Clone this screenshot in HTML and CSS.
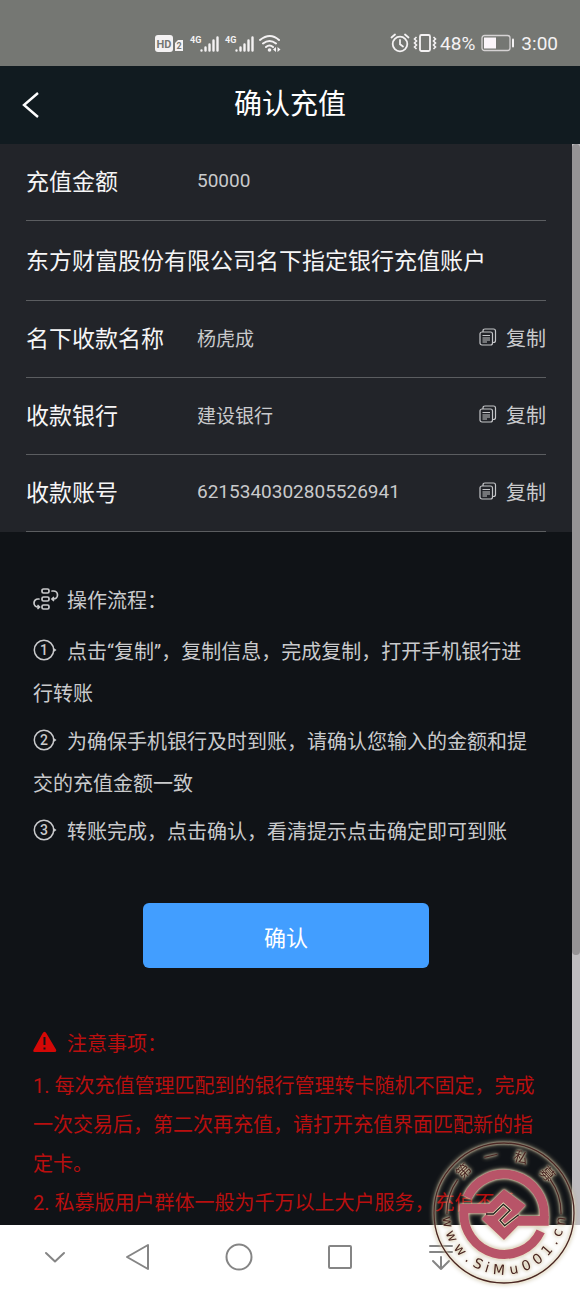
FILE: index.html
```
<!DOCTYPE html>
<html lang="zh-CN">

<head>
    <meta charset="UTF-8">
    <meta name="viewport" content="width=device-width, initial-scale=1.0">
    <title>确认充值</title>
    <link rel="stylesheet" href="styles.css">
</head>

<body>
    <!-- status bar -->
    <div class="status">
        <svg class="signals" width="128" height="24" viewBox="0 0 128 24">
            <rect x="0" y="4" width="18" height="17" rx="3" fill="#f4f2f3"/>
            <text x="9" y="17" class="hd">HD</text>
            <path d="M20 12l3-3h5v11h-8z" fill="#f4f2f3"/>
            <text x="24" y="18" class="sim">2</text>
            <text x="35" y="12" class="net">4G</text>
            <g stroke="#f4f2f3" stroke-width="2.4" stroke-linecap="round">
                <path d="M46.500 19.500v0M50.500 19.500v-3M54.500 19.500v-6M58.500 19.500v-10M62.500 19.500v-13"/>
                <path d="M81.500 19.500v0M85.500 19.500v-3M89.500 19.500v-6M93.500 19.500v-10M97.500 19.500v-13"/>
            </g>
            <text x="70" y="12" class="net">4G</text>
            <g fill="none" stroke="#f4f2f3" stroke-width="2" stroke-linecap="round">
                <path d="M105 9q10-8 19 0M108 12.500q6.500-5 13 0M111 16q3.500-3 7 0"/>
            </g>
            <circle cx="114.500" cy="19" r="1.800" fill="#f4f2f3"/>
            <path d="M121 16v5l-3-2.500zM122.500 16v5l3-2.500z" fill="#f4f2f3"/>
        </svg>
        <div class="status-right">
            <svg width="20" height="20" viewBox="0 0 20 20" fill="none" stroke="#f4f2f3" stroke-width="1.800" stroke-linecap="round">
                <circle cx="10" cy="11" r="7.300"/>
                <path d="M10 7v4.300l3 2.200M1.500 4.500l3.500-3M18.500 4.500l-3.500-3"/>
            </svg>
            <svg width="24" height="20" viewBox="0 0 24 20" fill="none" stroke="#f4f2f3" stroke-width="1.800">
                <rect x="7" y="2" width="10" height="16" rx="1.500"/>
                <path d="M3.500 4l-2 2 2 2-2 2 2 2-2 2 2 2M20.500 4l2 2-2 2 2 2-2 2 2 2-2 2" stroke-width="1.600"/>
            </svg>
            <span>48%</span>
            <svg class="battery" width="34" height="18" viewBox="0 0 34 18">
                <rect x="1" y="1.500" width="28" height="15" rx="2.500" fill="none" stroke="#d5d2d3" stroke-width="1.300"/>
                <rect x="3" y="3.500" width="12" height="11" fill="#fbf5fa"/>
                <path d="M32 5.500v7" stroke="#f4f2f3" stroke-width="2" stroke-linecap="round"/>
            </svg>
            <span>3:00</span>
        </div>
    </div>

    <header class="header">
        <button type="button" class="back" aria-label="返回">
            <svg width="18" height="26" viewBox="0 0 18 26" fill="none" stroke="#fff" stroke-width="2.400">
                <path d="M16 1L2 13l14 12"/>
            </svg>
        </button>
        <h1>确认充值</h1>
    </header>

    <div class="page">
        <main class="content">
            <section class="info">
                <div class="row">
                    <span class="label">充值金额</span>
                    <span class="value">50000</span>
                </div>
                <div class="row row-title">
                    <h2>东方财富股份有限公司名下指定银行充值账户</h2>
                </div>
                <div class="row">
                    <span class="label">名下收款名称</span>
                    <span class="value">杨虎成</span>
                    <button type="button" class="copy">
                        <svg width="18" height="18" viewBox="0 0 18 18"><use href="#copy"/></svg>复制
                    </button>
                </div>
                <div class="row">
                    <span class="label">收款银行</span>
                    <span class="value">建设银行</span>
                    <button type="button" class="copy">
                        <svg width="18" height="18" viewBox="0 0 18 18"><use href="#copy"/></svg>复制
                    </button>
                </div>
                <div class="row">
                    <span class="label">收款账号</span>
                    <span class="value">6215340302805526941</span>
                    <button type="button" class="copy">
                        <svg width="18" height="18" viewBox="0 0 18 18"><use href="#copy"/></svg>复制
                    </button>
                </div>
            </section>

            <section class="steps">
                <p class="heading">
                    <svg class="icon" width="26" height="24" viewBox="0 0 26 24" fill="none" stroke="#c9cacc" stroke-width="1.700" stroke-linecap="round">
                        <rect x="9" y="2" width="7" height="4" rx="1.500"/>
                        <rect x="9" y="10" width="7" height="4" rx="1.500"/>
                        <rect x="9" y="18" width="7" height="4" rx="1.500"/>
                        <path d="M19 4h1.500a4 4 0 0 1 0 8H19M6 12H5a4 4 0 0 0 0 8h1.500M20.500 10.500L19 12l1.500 1.500M5 18.500L6.500 20 5 21.500"/>
                    </svg>操作流程：
                </p>
                <p>
                    <svg class="icon" width="26" height="24" viewBox="0 0 26 24"><use href="#ring"/><text x="11" y="17">1</text></svg>点击“复制”，复制信息，完成复制，打开手机银行进行转账
                </p>
                <p>
                    <svg class="icon" width="26" height="24" viewBox="0 0 26 24"><use href="#ring"/><text x="11" y="17">2</text></svg>为确保手机银行及时到账，请确认您输入的金额和提交的充值金额一致
                </p>
                <p>
                    <svg class="icon" width="26" height="24" viewBox="0 0 26 24"><use href="#ring"/><text x="11" y="17">3</text></svg>转账完成，点击确认，看清提示点击确定即可到账
                </p>
            </section>

            <button type="button" class="confirm">确认</button>

            <section class="notes">
                <p class="heading">
                    <svg class="icon" width="26" height="24" viewBox="0 0 26 24">
                        <path d="M9.500 3.500q2-3.500 4 0L23 19.500q1 2.500-1.500 2.500h-20Q-.5 22 .7 19.500z" fill="#d40806"/>
                        <path d="M11.500 7v8M11.500 17.500v2" stroke="#101317" stroke-width="2"/>
                    </svg>注意事项：
                </p>
                <p>1. 每次充值管理匹配到的银行管理转卡随机不固定，完成一次交易后，第二次再充值，请打开充值界面匹配新的指定卡。</p>
                <p>2. 私募版用户群体一般为千万以上大户服务，充值不低</p>
            </section>
        </main>
        <div class="scrollbar">
            <div class="thumb"></div>
        </div>
    </div>

    <!-- system navigation -->
    <nav class="navbar">
        <button type="button" aria-label="收起">
            <svg width="32" height="32" viewBox="0 0 32 32"><path d="M7 12l9 8.500 9-8.500"/></svg>
        </button>
        <button type="button" aria-label="返回">
            <svg width="32" height="32" viewBox="0 0 32 32"><path d="M26 4v24L5 16z"/></svg>
        </button>
        <button type="button" aria-label="主页">
            <svg width="32" height="32" viewBox="0 0 32 32"><circle cx="16" cy="16" r="12.500"/></svg>
        </button>
        <button type="button" aria-label="最近任务">
            <svg width="32" height="32" viewBox="0 0 32 32"><rect x="5" y="5" width="22" height="22" rx="1"/></svg>
        </button>
        <button type="button" aria-label="通知栏">
            <svg width="32" height="32" viewBox="0 0 32 32"><path d="M5 5h22M5 11h22M16 16v12M8 20l8 8 8-8"/></svg>
        </button>
    </nav>

    <!-- seal, 3 units = 1px -->
    <svg class="seal" width="148" height="148" viewBox="0 12 444 444" role="img" aria-label="第一私募">
        <g fill="none" stroke="#4a2724" stroke-width="4">
            <circle cx="222" cy="234" r="210"/>
            <path d="M51 238A171 171 0 0 1 83 134M361 134A171 171 0 0 1 393 238"/>
        </g>
        <g class="seal-text">
            <text x="222" y="75" transform="rotate(-44 222 234)">第</text>
            <text x="222" y="75" transform="rotate(-13 222 234)">一</text>
            <text x="222" y="75" transform="rotate(17 222 234)">私</text>
            <text x="222" y="75" transform="rotate(48 222 234)">募</text>
        </g>
        <g class="seal-url">
            <text x="222" y="419" transform="rotate(81 222 234)">w</text>
            <text x="222" y="419" transform="rotate(66 222 234)">w</text>
            <text x="222" y="419" transform="rotate(50 222 234)">w</text>
            <text x="222" y="419" transform="rotate(38 222 234)">.</text>
            <text x="222" y="419" transform="rotate(27 222 234)">S</text>
            <text x="222" y="419" transform="rotate(17 222 234)">i</text>
            <text x="222" y="419" transform="rotate(5 222 234)">M</text>
            <text x="222" y="419" transform="rotate(-10 222 234)">u</text>
            <text x="222" y="419" transform="rotate(-23 222 234)">0</text>
            <text x="222" y="419" transform="rotate(-36 222 234)">0</text>
            <text x="222" y="419" transform="rotate(-49 222 234)">1</text>
            <text x="222" y="419" transform="rotate(-60 222 234)">.</text>
            <text x="222" y="419" transform="rotate(-70 222 234)">c</text>
            <text x="222" y="419" transform="rotate(-82 222 234)">n</text>
        </g>
        <path d="M112 187A121 121 0 0 1 342 250M102 228A121 121 0 0 0 332 289" fill="none" stroke="#b85468" stroke-width="27"/>
        <path d="M89 207H177L222 163 287 211 256 243H356V272H264L222 315 155 252 172 235H89z" fill="#b85468"/>
        <g fill="none">
            <path d="M172 237H190L220 208 240 226 210 256 224 272 262 242" stroke="#e3d8b4" stroke-width="9"/>
            <path d="M168 237H190L220 208 240 226 210 256 224 272 266 239" stroke="#221d1e" stroke-width="4"/>
        </g>
    </svg>

    <svg class="defs" aria-hidden="true">
        <symbol id="copy" viewBox="0 0 18 18">
            <g fill="none" stroke="#c4c5c8" stroke-width="1.200">
                <rect x="1" y="4" width="12.500" height="13" rx="2"/>
                <path d="M4 4V3q0-2 2-2h8.500q2 0 2 2v9.500q0 2-2 2h-1M3.500 7.500h7.500M3.500 10h7.500M3.500 12h7.500M3.500 14h4.500"/>
            </g>
        </symbol>
        <symbol id="ring" viewBox="0 0 26 24">
            <circle cx="11" cy="12" r="9.700" fill="none" stroke="#c9cacc" stroke-width="1.500"/>
            <path d="M20 9.500l3.500 2.500-3.500 2.500z" fill="#c9cacc"/>
        </symbol>
    </svg>
</body>

</html>
```
FILE: styles.css
```
* {
    box-sizing: border-box;
}

body {
    margin: 0;
    height: 100vh;
    display: flex;
    flex-direction: column;
    position: relative;
    overflow: hidden;
    background: #101317;
    color: #c9cacc;
    font-family: Roboto, "Noto Sans CJK SC", sans-serif;
    font-size: 20px;
}

h1,
h2,
p {
    margin: 0;
    font-weight: normal;
}

button {
    border: 0;
    padding: 0;
    background: none;
    color: inherit;
    font: inherit;
    cursor: pointer;
}

svg {
    flex: none;
}

.defs {
    display: none;
}

/* status bar */
.status {
    height: 66px;
    flex: none;
    display: flex;
    align-items: center;
    justify-content: space-between;
    padding: 20px 22px 0 155px;
    background: #757773;
    color: #f4f2f3;
    font-size: 19px;
}

.status-right {
    display: flex;
    align-items: center;
    gap: 3px;
}

.battery {
    margin: 0 3px;
}

.hd {
    font-size: 11px;
    font-weight: bold;
    text-anchor: middle;
    fill: #757773;
}

.sim {
    font-size: 9px;
    font-weight: bold;
    text-anchor: middle;
    fill: #757773;
}

.net {
    font-size: 9px;
    font-weight: bold;
    fill: #f4f2f3;
}

/* header */
.header {
    height: 78px;
    flex: none;
    display: grid;
    grid-template-columns: 60px 1fr 60px;
    align-items: center;
    background: #111b20;
    color: #fff;
}

.back {
    height: 60px;
    display: flex;
    align-items: center;
    padding-left: 22px;
}

.header h1 {
    font-size: 28px;
    line-height: 40px;
    text-align: center;
}

/* page */
.page {
    flex: 1;
    min-height: 0;
    display: flex;
}

.content {
    flex: 1;
    overflow: hidden;
}

.scrollbar {
    width: 8px;
    background: #bfbdc0;
}

.thumb {
    height: 75%;
    border-radius: 4px;
    background: #959395;
}

.info {
    padding: 0 26px;
    background: #222429;
}

.row {
    height: 77px;
    display: flex;
    align-items: center;
    padding-bottom: 4px;
    border-bottom: 1px solid #5b5d60;
}

.row-title {
    height: 80px;
}

.label,
.row h2 {
    font-size: 23px;
    color: #f5f5f6;
}

.label {
    width: 171px;
}

.value {
    flex: 1;
    font-size: 19px;
}

.copy {
    display: flex;
    align-items: center;
    gap: 9px;
}

.steps {
    padding: 48px 32px 0 33px;
    line-height: 42px;
}

.steps p {
    margin-bottom: 6px;
}

.steps .heading {
    margin-bottom: 9px;
}

.steps text {
    font-size: 14px;
    font-weight: 500;
    text-anchor: middle;
    fill: #c9cacc;
}

.icon {
    margin-right: 8px;
    vertical-align: -3px;
}

.confirm {
    display: block;
    width: 50%;
    height: 65px;
    margin: 50px auto 57px;
    border-radius: 6px;
    background: #429eff;
    color: #fff;
    font-size: 22px;
}

.notes {
    padding: 0 32px 0 33px;
    line-height: 39px;
    color: #b90f0f;
}

.notes .heading {
    margin-bottom: 3px;
}

/* system navigation */
.navbar {
    height: 64px;
    flex: none;
    display: grid;
    grid-template-columns: 66fr 101fr 101fr 101fr 101fr;
    justify-items: center;
    align-items: center;
    padding: 0 89px 0 22px;
    background: #fff;
}

.navbar button {
    height: 32px;
}

.navbar svg {
    display: block;
    fill: none;
    stroke: #858585;
    stroke-width: 2;
    stroke-linecap: round;
    stroke-linejoin: round;
}

/* seal over the bottom right corner */
.seal {
    position: absolute;
    right: 2px;
    bottom: 2px;
    filter: drop-shadow(0 0 1px #fff3cf) drop-shadow(0 0 2px #b5a98a);
}

.seal text {
    text-anchor: middle;
    fill: #4a2724;
}

.seal-text {
    font-family: "Noto Sans CJK SC", sans-serif;
    font-size: 44px;
}

.seal-url {
    font-family: "DejaVu Sans", sans-serif;
    font-size: 42px;
}
```
